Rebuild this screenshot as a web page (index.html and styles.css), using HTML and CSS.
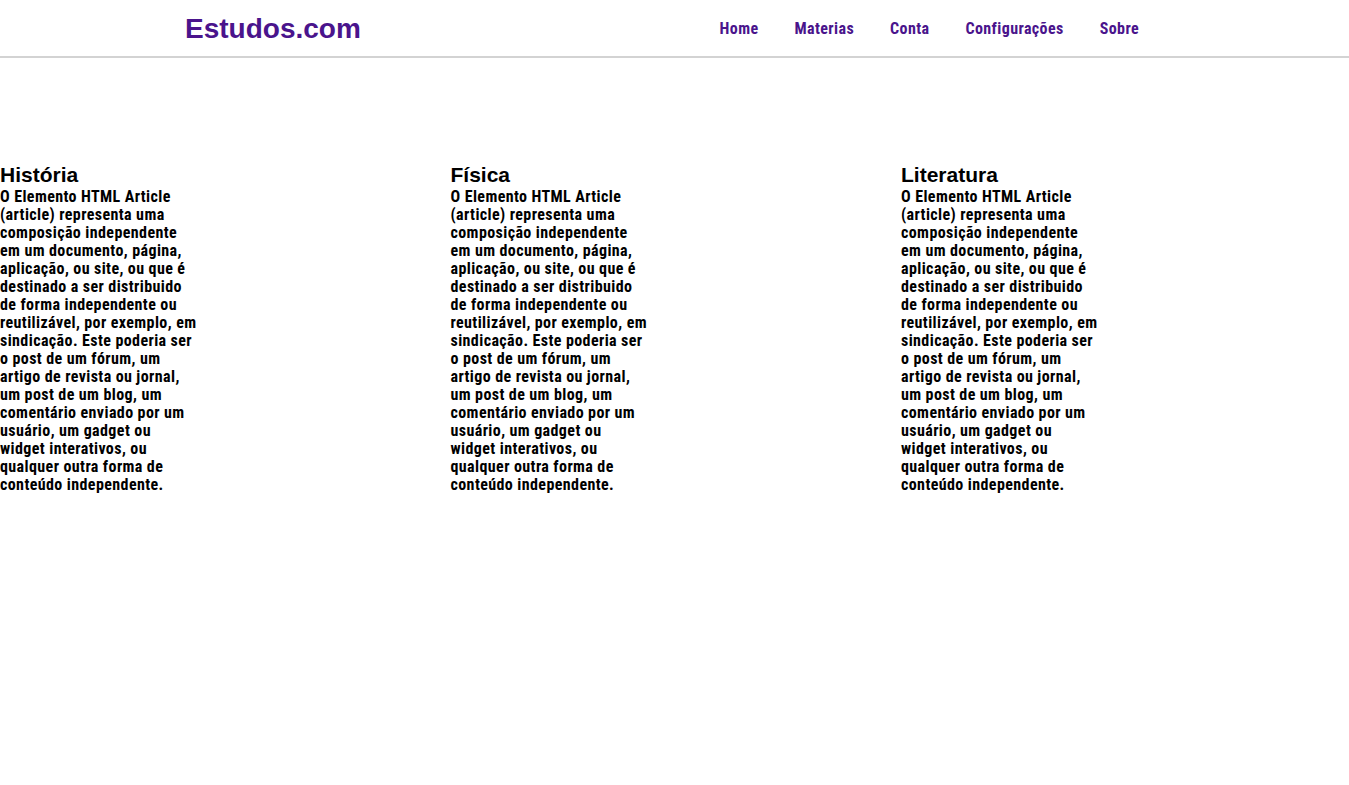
FILE: index.html
```html
<!DOCTYPE html>
<html lang="pt-BR">
<head>
<meta charset="utf-8">
<title>Estudos.com</title>
<link rel="stylesheet" href="styles.css">
</head>
<body>
<header class="topbar">
  <div class="topbar-inner">
    <a class="logo" href="#">Estudos.com</a>
    <nav class="menu">
      <a href="#">Home</a>
      <a href="#">Materias</a>
      <a href="#">Conta</a>
      <a href="#">Configurações</a>
      <a href="#">Sobre</a>
    </nav>
  </div>
</header>
<main class="content">
  <article class="card">
    <h2>História</h2>
    <p>O Elemento HTML Article (article) representa uma composição independente em um documento, página, aplicação, ou site, ou que é destinado a ser distribuido de forma independente ou reutilizável, por exemplo, em sindicação. Este poderia ser o post de um fórum, um artigo de revista ou jornal, um post de um blog, um comentário enviado por um usuário, um gadget ou widget interativos, ou qualquer outra forma de conteúdo independente.</p>
  </article>
  <article class="card">
    <h2>Física</h2>
    <p>O Elemento HTML Article (article) representa uma composição independente em um documento, página, aplicação, ou site, ou que é destinado a ser distribuido de forma independente ou reutilizável, por exemplo, em sindicação. Este poderia ser o post de um fórum, um artigo de revista ou jornal, um post de um blog, um comentário enviado por um usuário, um gadget ou widget interativos, ou qualquer outra forma de conteúdo independente.</p>
  </article>
  <article class="card">
    <h2>Literatura</h2>
    <p>O Elemento HTML Article (article) representa uma composição independente em um documento, página, aplicação, ou site, ou que é destinado a ser distribuido de forma independente ou reutilizável, por exemplo, em sindicação. Este poderia ser o post de um fórum, um artigo de revista ou jornal, um post de um blog, um comentário enviado por um usuário, um gadget ou widget interativos, ou qualquer outra forma de conteúdo independente.</p>
  </article>
</main>
</body>
</html>
```
FILE: styles.css
```css
* { box-sizing: border-box; }
body {
  margin: 0;
  font-family: "Roboto Condensed", "Liberation Sans", sans-serif;
  color: #000;
  background: #fff;
}
.topbar {
  height: 58px;
  border-bottom: 2px solid #d3d3d3;
}
.topbar-inner {
  display: flex;
  align-items: center;
  justify-content: space-between;
  height: 56px;
  padding: 0 210px 0 185px;
}
.logo {
  font-family: "Liberation Sans", sans-serif;
  font-size: 28px;
  font-weight: bold;
  color: #4a148c;
  text-decoration: none;
  line-height: 1;
  padding-top: 2px;
}
.menu {
  display: flex;
  gap: 36px;
}
.menu a {
  font-size: 16px;
  font-weight: bold;
  letter-spacing: 0.4px;
  color: #4a148c;
  text-decoration: none;
}
.content {
  display: grid;
  grid-template-columns: repeat(3, 448px);
  justify-content: space-between;
  padding-top: 104px;
}
.card h2 {
  margin: 0;
  font-family: "Liberation Sans", sans-serif;
  font-size: 21px;
  font-weight: bold;
  line-height: 26px;
}
.card p {
  margin: 0;
  width: 200px;
  font-size: 16px;
  font-weight: bold;
  letter-spacing: 0.4px;
  line-height: 18px;
}
```
